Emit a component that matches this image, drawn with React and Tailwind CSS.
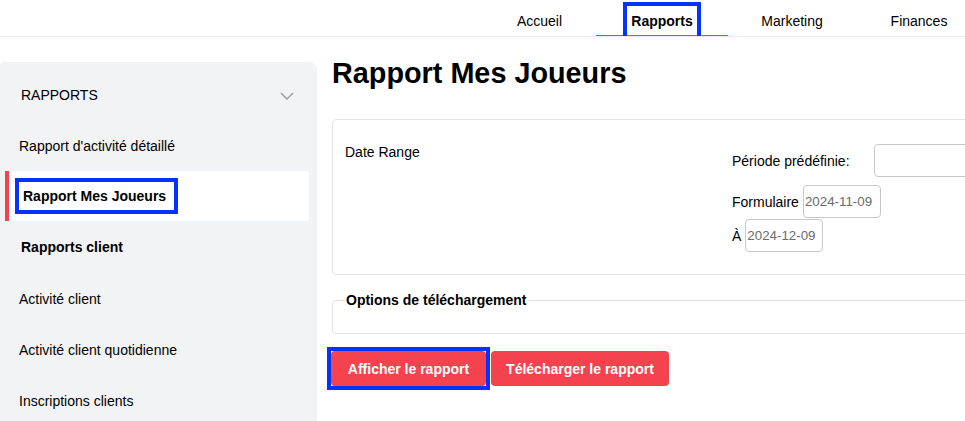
import React from 'react';

const tabs = [
  { label: 'Accueil', width: 'w-[113px]' },
  { label: 'Rapports', width: 'w-[132px]' },
  { label: 'Marketing', width: 'w-[128px]' },
  { label: 'Finances', width: 'w-[126px]' },
];

const Header = () => (
  <div className="h-[37px] border-b border-[#ececec] flex pl-[483px] overflow-hidden whitespace-nowrap">
    {tabs.map((tab) => {
      const active = tab.label === 'Rapports';
      return (
        <div
          key={tab.label}
          className={`relative shrink-0 h-[37px] ${tab.width} text-center text-[14px] leading-[18px] text-black ${
            active ? 'font-bold' : ''
          }`}
        >
          <div className="pt-[12px]">{tab.label}</div>
          {active && (
            <>
              <div className="absolute left-0 right-0 bottom-[0px] h-[2px] bg-[#f5424f]" />
              <div className="absolute left-[27px] top-[2px] w-[78px] h-[42px] border-[4px] border-[#0433ff]" />
            </>
          )}
        </div>
      );
    })}
  </div>
);

const Sidebar = () => (
  <div className="w-[317px] shrink-0 mt-[25px] bg-[#f2f3f5] rounded-tr-lg rounded-tl-sm text-[14px] leading-[18px] text-black">
    <div className="h-[59px] pt-[24px] pl-[21px] pr-[23px] flex justify-between">
      <span>RAPPORTS</span>
      <svg width="14" height="8" viewBox="0 0 14 8" className="mt-[6px]">
        <polyline points="1,1 7,7 13,1" fill="none" stroke="#9a9a9a" strokeWidth="1.4" />
      </svg>
    </div>
    <div className="h-[50px] flex items-center pl-[19px]">Rapport d'activité détaillé</div>
    <div className="h-[50px] ml-[5px] mr-[8px] border-l-4 border-[#f5424f] bg-white flex items-center pl-[6px]">
      <span className="inline-block border-[4px] border-[#0433ff] pl-[4px] pr-[8px] py-[5px] font-bold">
        Rapport Mes Joueurs
      </span>
    </div>
    <div className="h-[52px] flex items-center pl-[21px] font-bold">Rapports client</div>
    <div className="h-[51px] flex items-center pl-[19px]">Activité client</div>
    <div className="h-[51px] flex items-center pl-[19px]">Activité client quotidienne</div>
    <div className="h-[51px] flex items-center pl-[19px]">Inscriptions clients</div>
  </div>
);

const DateInput = ({ value }) => (
  <input
    type="text"
    readOnly
    value={value}
    className="w-[78px] h-[33px] px-[1px] border border-[#c8c8c8] rounded-[4px] text-[13.33px] text-[#6b6b6b] outline-none"
    style={{ fontFamily: '"Liberation Sans", Arial, sans-serif' }}
  />
);

const Main = () => (
  <div className="flex-1 pl-[15px] overflow-hidden text-[14px] leading-[18px] text-black">
    <h1 className="pt-[20px] text-[28.8px] leading-[32px] font-bold whitespace-nowrap">Rapport Mes Joueurs</h1>

    <div className="mt-[30px] w-[720px] h-[156px] border border-[#e3e3e3] rounded-[4px] flex">
      <div className="w-[399px] shrink-0 pl-[12px] pt-[23px]">Date Range</div>
      <div className="shrink-0 pt-[24px] whitespace-nowrap">
        <div className="flex items-center h-[33px]">
          <span>Période prédéfinie:</span>
          <div className="ml-[24px] w-[200px] h-[33px] border border-[#c8c8c8] rounded-[4px]" />
        </div>
        <div className="flex items-center h-[33px] mt-[8px]">
          <span className="mr-[4px]">Formulaire</span>
          <DateInput value="2024-11-09" />
        </div>
        <div className="flex items-center h-[33px] mt-[1px]">
          <span className="mr-[4px]">À</span>
          <DateInput value="2024-12-09" />
        </div>
      </div>
    </div>

    <fieldset className="mt-[16px] w-[720px] border border-[#e3e3e3] rounded-[4px] px-[12px] pb-[24px]">
      <legend className="px-[1px] font-bold">Options de téléchargement</legend>
    </fieldset>

    <div className="mt-[13px] flex items-start ml-[-5px]">
      <div className="border-[4px] border-[#0433ff]">
        <button className="h-[35px] w-[155px] bg-[#f5424f] rounded-[4px] text-white font-bold">
          Afficher le rapport
        </button>
      </div>
      <button className="mt-[4px] ml-[1px] h-[35px] w-[178px] bg-[#f5424f] rounded-[4px] text-white font-bold">
        Télécharger le rapport
      </button>
    </div>
  </div>
);

export default function App() {
  return (
    <div
      className="w-[965px] h-[421px] overflow-hidden bg-white flex flex-col"
      style={{ fontFamily: '"Liberation Sans", Arial, Helvetica, sans-serif' }}
    >
      <Header />
      <div className="flex flex-1 min-h-0">
        <Sidebar />
        <Main />
      </div>
    </div>
  );
}
